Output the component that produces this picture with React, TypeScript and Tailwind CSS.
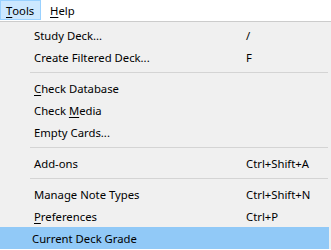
import React from "react";

type Item =
  | { type: "sep" }
  | { type: "item"; label: React.ReactNode; shortcut?: string; active?: boolean };

const U = ({ children }: { children: React.ReactNode }) => (
  <span className="underline underline-offset-[2px] decoration-1">{children}</span>
);

const items: Item[] = [
  { type: "item", label: "Study Deck...", shortcut: "/" },
  { type: "item", label: "Create Filtered Deck...", shortcut: "F" },
  { type: "sep" },
  { type: "item", label: <><U>C</U>heck Database</> },
  { type: "item", label: <>Check <U>M</U>edia</> },
  { type: "item", label: "Empty Cards..." },
  { type: "sep" },
  { type: "item", label: "Add-ons", shortcut: "Ctrl+Shift+A" },
  { type: "sep" },
  { type: "item", label: "Manage Note Types", shortcut: "Ctrl+Shift+N" },
  { type: "item", label: <><U>P</U>references</>, shortcut: "Ctrl+P" },
  { type: "item", label: "Current Deck Grade", active: true },
];

export default function App() {
  return (
    <div
      className="w-[331px] h-[250px] bg-white overflow-hidden text-[11.3px] text-black leading-none"
      style={{ fontFamily: '"Segoe UI", "Noto Sans", sans-serif' }}
    >
      <div className="flex h-[21px] items-start">
        <div className="w-[41px] h-[20px] bg-[#cce8ff] border border-[#99d1ff] pl-[5px] pt-[2px] flex items-center">
          <U>T</U>ools
        </div>
        <div className="h-[20px] pl-[9px] pt-[2px] flex items-center">
          <U>H</U>elp
        </div>
      </div>
      <div className="w-[331px] bg-[#f0f0f0] border-t border-[#cccccc] pt-[2px] pr-[2px]">
        {items.map((it, i) =>
          it.type === "sep" ? (
            <div key={i} className="h-[9px] flex items-center pl-[30px] pr-[1px]">
              <div className="h-px w-full bg-[#d4d4d4]" />
            </div>
          ) : (
            <div
              key={i}
              className={`h-[22px] flex items-center pt-[2px] ${it.active ? "bg-[#91c9f7] pl-[32px]" : "pl-[34px]"}`}
            >
              <span className="w-[212px] whitespace-nowrap">{it.label}</span>
              <span className="whitespace-nowrap">{it.shortcut}</span>
            </div>
          )
        )}
      </div>
    </div>
  );
}
